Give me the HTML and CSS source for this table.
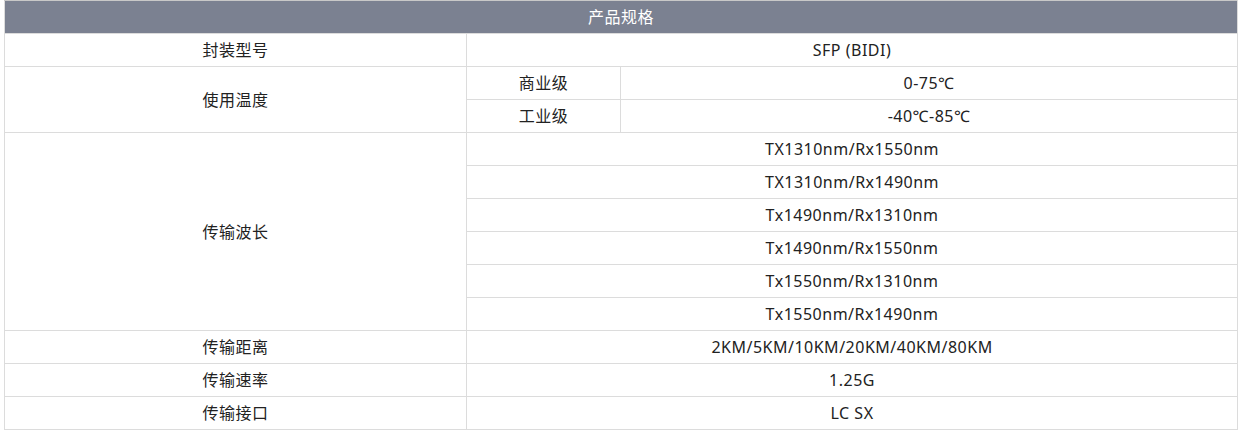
FILE: index.html
```html
<!DOCTYPE html>
<html lang="zh">
<head>
<meta charset="utf-8">
<link rel="stylesheet" href="styles.css">
</head>
<body>
<table class="spec">
  <colgroup>
    <col class="c1">
    <col class="c2">
    <col class="c3">
  </colgroup>
  <thead>
    <tr><th colspan="3">产品规格</th></tr>
  </thead>
  <tbody>
    <tr><td>封装型号</td><td colspan="2">SFP (BIDI)</td></tr>
    <tr><td rowspan="2">使用温度</td><td>商业级</td><td>0-75℃</td></tr>
    <tr><td>工业级</td><td>-40℃-85℃</td></tr>
    <tr><td rowspan="6">传输波长</td><td colspan="2">TX1310nm/Rx1550nm</td></tr>
    <tr><td colspan="2">TX1310nm/Rx1490nm</td></tr>
    <tr><td colspan="2">Tx1490nm/Rx1310nm</td></tr>
    <tr><td colspan="2">Tx1490nm/Rx1550nm</td></tr>
    <tr><td colspan="2">Tx1550nm/Rx1310nm</td></tr>
    <tr><td colspan="2">Tx1550nm/Rx1490nm</td></tr>
    <tr><td>传输距离</td><td colspan="2">2KM/5KM/10KM/20KM/40KM/80KM</td></tr>
    <tr><td>传输速率</td><td colspan="2">1.25G</td></tr>
    <tr><td>传输接口</td><td colspan="2">LC SX</td></tr>
  </tbody>
</table>
</body>
</html>
```
FILE: styles.css
```css
html, body {
  margin: 0;
  padding: 0;
  background: #fff;
}
body {
  padding: 0 0 0 4px;
  font-family: "Noto Sans", "Noto Sans CJK SC", sans-serif;
  font-size: 16px;
  letter-spacing: 0.5px;
  color: #222;
}
.spec {
  border-collapse: collapse;
  table-layout: fixed;
  width: 1233px;
}
.c1 { width: 462px; }
.c2 { width: 154px; }
.c3 { width: 617px; }
.spec th,
.spec td {
  border: 1px solid #dcdcdc;
  height: 32px;
  padding: 0;
  text-align: center;
  vertical-align: middle;
  font-weight: normal;
  line-height: 20px;
}
.spec th {
  background: #7b8191;
  color: #fff;
  border-color: #c8c8c8 #dcdcdc #dcdcdc #dcdcdc;
}
```
